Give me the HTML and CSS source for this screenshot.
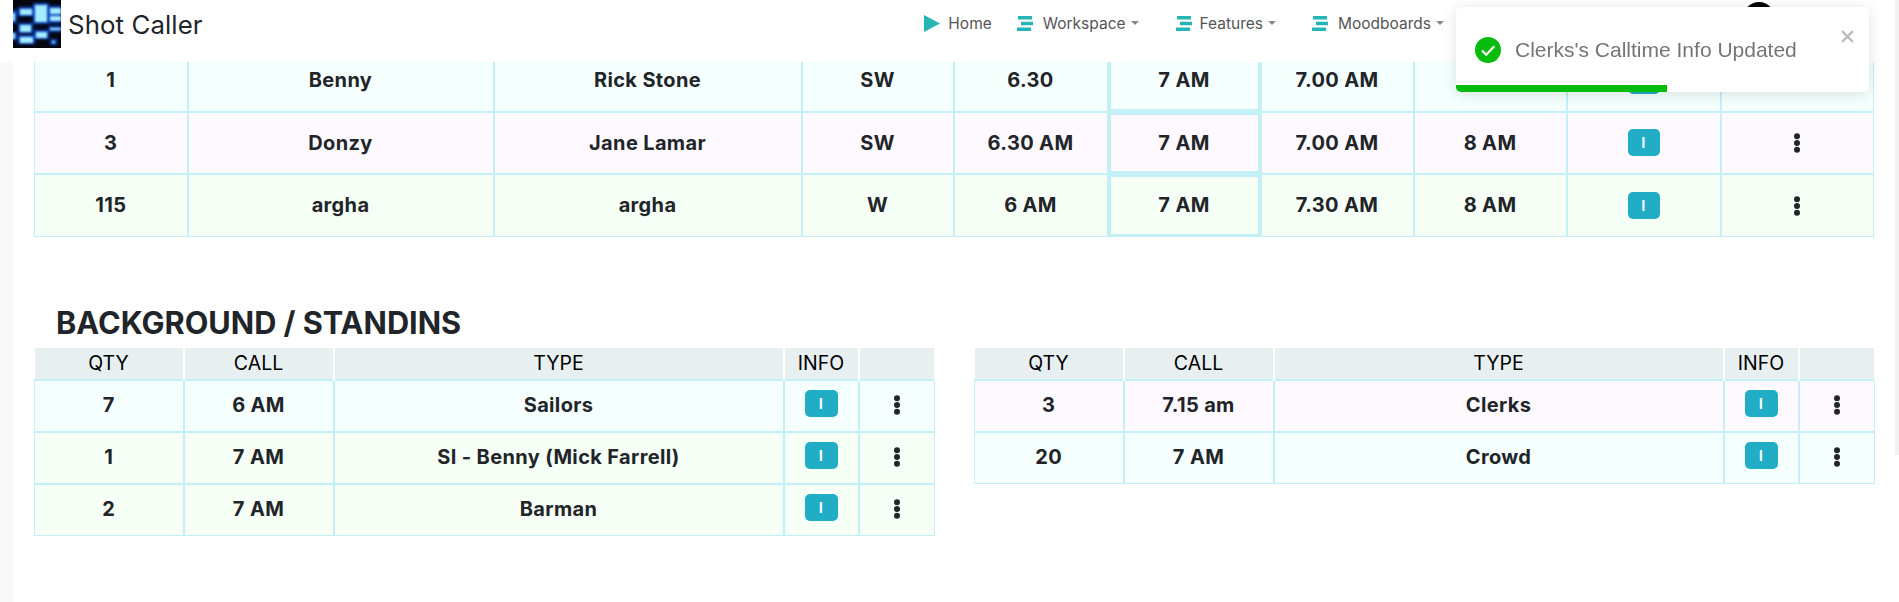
FILE: index.html
```html
<!DOCTYPE html>
<html>
<head>
  <meta charset="utf-8">
  <title>Shot Caller</title>
  <link rel="stylesheet" href="styles.css">
</head>
<body>
  <div class="navbar">
    <a class="brand" href="#">
      <svg class="logo" width="48" height="48" viewBox="0 0 48 48">
        <defs>
          <filter id="glow"><feGaussianBlur stdDeviation="1.8"/></filter>
          <filter id="soft"><feGaussianBlur stdDeviation="1.1"/></filter>
        </defs>
        <rect width="48" height="48" fill="#06060e"/>
        <g fill="#0b5cff" opacity="0.75" filter="url(#glow)">
          <rect x="5" y="7" width="15" height="9"/>
          <rect x="20" y="3" width="16" height="21"/>
          <rect x="36" y="6" width="12" height="17"/>
          <rect x="36" y="26" width="12" height="6"/>
          <rect x="5" y="23" width="15" height="10"/>
          <rect x="21" y="30" width="15" height="9"/>
          <rect x="5" y="35" width="17" height="9"/>
          <rect x="37" y="39" width="7" height="6"/>
          <rect x="-2" y="10" width="6" height="13"/>
          <rect x="-2" y="32" width="6" height="8"/>
        </g>
        <g fill="#a4ecff" filter="url(#soft)">
          <rect x="7" y="9" width="12" height="6"/>
          <rect x="22" y="5" width="12" height="17"/>
          <rect x="37" y="8" width="11" height="6"/>
          <rect x="37" y="16" width="11" height="5"/>
          <rect x="37" y="28" width="11" height="2"/>
          <rect x="7" y="25" width="11" height="7"/>
          <rect x="23" y="32" width="11" height="6"/>
          <rect x="7" y="37" width="13" height="6"/>
          <rect x="39" y="41" width="3" height="2"/>
          <rect x="-1" y="13" width="3" height="8"/>
          <rect x="-1" y="33" width="3" height="6"/>
        </g>
      </svg>
      <span>Shot Caller</span>
    </a>
    <div class="nav-links">
      <a class="nav-item nav-home" href="#">
        <svg width="16" height="17" viewBox="0 0 16 17"><path d="M0 0L16 8.5L0 17Z" fill="#26b5b5"/></svg>
        Home
      </a>
      <a class="nav-item nav-work" href="#">
        <svg width="16" height="15" viewBox="0 0 16 15"><path d="M1 0H15V3.5H1ZM4 5.7H16V9.2H4ZM0 11.5H14V15H0Z" fill="#26b5b5"/></svg>
        Workspace<i class="caret"></i>
      </a>
      <a class="nav-item nav-feat" href="#">
        <svg width="16" height="15" viewBox="0 0 16 15"><path d="M1 0H15V3.5H1ZM4 5.7H16V9.2H4ZM0 11.5H14V15H0Z" fill="#26b5b5"/></svg>
        Features<i class="caret"></i>
      </a>
      <a class="nav-item nav-mood" href="#">
        <svg width="16" height="15" viewBox="0 0 16 15"><path d="M1 0H15V3.5H1ZM4 5.7H16V9.2H4ZM0 11.5H14V15H0Z" fill="#26b5b5"/></svg>
        Moodboards<i class="caret"></i>
      </a>
    </div>
    <div class="avatar"></div>
  </div>

  <div class="scroll-track"></div>

  <div class="toast">
    <svg class="toast-icon" width="26" height="26" viewBox="0 0 26 26">
      <circle cx="13" cy="13" r="13" fill="#07bc0c"/>
      <path d="M7 13.5L11.2 17.7L19.3 9.2" fill="none" stroke="#fff" stroke-width="2.2"/>
    </svg>
    <span class="toast-text">Clerks's Calltime Info Updated</span>
    <svg class="toast-close" width="13" height="13" viewBox="0 0 13 13">
      <path d="M1 1L12 12M12 1L1 12" stroke="#bbb" stroke-width="2.4"/>
    </svg>
    <div class="toast-bar"></div>
  </div>

  <div class="page">
    <div class="side"></div>
    <div class="main">
      <table class="crew">
        <colgroup>
          <col class="c153"><col class="c306"><col class="c308"><col class="c152"><col class="c154">
          <col class="c153"><col class="c153"><col class="c153"><col class="c154"><col class="c153">
        </colgroup>
        <tbody>
          <tr class="teal">
            <td>1</td><td>Benny</td><td>Rick Stone</td><td>SW</td><td>6.30</td>
            <td class="call">7 AM</td><td>7.00 AM</td><td>8 AM</td>
            <td><a class="info-btn">I</a></td>
            <td><svg class="dots" width="8" height="20" viewBox="0 0 8 20"><circle cx="4" cy="3.2" r="3"/><circle cx="4" cy="10" r="3"/><circle cx="4" cy="16.8" r="3"/></svg></td>
          </tr>
          <tr class="purple">
            <td>3</td><td>Donzy</td><td>Jane Lamar</td><td>SW</td><td>6.30 AM</td>
            <td class="call">7 AM</td><td>7.00 AM</td><td>8 AM</td>
            <td><a class="info-btn">I</a></td>
            <td><svg class="dots" width="8" height="20" viewBox="0 0 8 20"><circle cx="4" cy="3.2" r="3"/><circle cx="4" cy="10" r="3"/><circle cx="4" cy="16.8" r="3"/></svg></td>
          </tr>
          <tr class="green">
            <td>115</td><td>argha</td><td>argha</td><td>W</td><td>6 AM</td>
            <td class="call">7 AM</td><td>7.30 AM</td><td>8 AM</td>
            <td><a class="info-btn">I</a></td>
            <td><svg class="dots" width="8" height="20" viewBox="0 0 8 20"><circle cx="4" cy="3.2" r="3"/><circle cx="4" cy="10" r="3"/><circle cx="4" cy="16.8" r="3"/></svg></td>
          </tr>
        </tbody>
      </table>

      <h2 class="section-title">BACKGROUND / STANDINS</h2>

      <div class="two-col">
        <table class="bg">
          <colgroup><col class="c149"><col class="c150"><col class="c450"><col class="c75"><col class="c76"></colgroup>
          <thead><tr><th>QTY</th><th>CALL</th><th>TYPE</th><th>INFO</th><th></th></tr></thead>
          <tbody>
            <tr class="teal">
              <td>7</td><td>6 AM</td><td>Sailors</td>
              <td><a class="info-btn">I</a></td>
              <td><svg class="dots" width="8" height="20" viewBox="0 0 8 20"><circle cx="4" cy="3.2" r="3"/><circle cx="4" cy="10" r="3"/><circle cx="4" cy="16.8" r="3"/></svg></td>
            </tr>
            <tr class="green">
              <td>1</td><td>7 AM</td><td>SI - Benny (Mick Farrell)</td>
              <td><a class="info-btn">I</a></td>
              <td><svg class="dots" width="8" height="20" viewBox="0 0 8 20"><circle cx="4" cy="3.2" r="3"/><circle cx="4" cy="10" r="3"/><circle cx="4" cy="16.8" r="3"/></svg></td>
            </tr>
            <tr class="green">
              <td>2</td><td>7 AM</td><td>Barman</td>
              <td><a class="info-btn">I</a></td>
              <td><svg class="dots" width="8" height="20" viewBox="0 0 8 20"><circle cx="4" cy="3.2" r="3"/><circle cx="4" cy="10" r="3"/><circle cx="4" cy="16.8" r="3"/></svg></td>
            </tr>
          </tbody>
        </table>

        <table class="bg">
          <colgroup><col class="c149"><col class="c150"><col class="c450"><col class="c75"><col class="c76"></colgroup>
          <thead><tr><th>QTY</th><th>CALL</th><th>TYPE</th><th>INFO</th><th></th></tr></thead>
          <tbody>
            <tr class="purple">
              <td>3</td><td>7.15 am</td><td>Clerks</td>
              <td><a class="info-btn">I</a></td>
              <td><svg class="dots" width="8" height="20" viewBox="0 0 8 20"><circle cx="4" cy="3.2" r="3"/><circle cx="4" cy="10" r="3"/><circle cx="4" cy="16.8" r="3"/></svg></td>
            </tr>
            <tr class="teal">
              <td>20</td><td>7 AM</td><td>Crowd</td>
              <td><a class="info-btn">I</a></td>
              <td><svg class="dots" width="8" height="20" viewBox="0 0 8 20"><circle cx="4" cy="3.2" r="3"/><circle cx="4" cy="10" r="3"/><circle cx="4" cy="16.8" r="3"/></svg></td>
            </tr>
          </tbody>
        </table>
      </div>
    </div>
  </div>
</body>
</html>
```

FILE: styles.css
```css
html, body {
  margin: 0;
  height: 100%;
  overflow: hidden;
}

body {
  background-color: white;
  color: #212529;
  font-family: Inter, "Noto Sans", sans-serif;
}

/* Top bar sits over the scrolled page */
.navbar {
  position: fixed;
  top: 0;
  left: 0;
  right: 0;
  height: 62px;
  background-color: white;
  display: flex;
  align-items: flex-start;
  padding: 0 455px 0 13px;
  z-index: 2;
}

.brand {
  display: flex;
  align-items: center;
  height: 48px;
  color: #212529;
  text-decoration: none;
  font-size: 25.8px;
}

.brand span {
  margin-left: 7px;
  letter-spacing: 0.1px;
}

.nav-links {
  display: flex;
  align-items: center;
  height: 46px;
  margin-left: auto;
}

.nav-item {
  display: flex;
  align-items: center;
  color: #555;
  text-decoration: none;
  font-size: 15.5px;
}

.nav-item svg {
  margin-right: 10px;
}

.nav-home svg { margin-right: 8px; }
.nav-feat svg { margin-right: 8px; }

.nav-work { margin-left: 25px; }
.nav-feat { margin-left: 37px; }
.nav-mood { margin-left: 36px; }

.caret {
  display: inline-block;
  margin-left: 5px;
  border-top: 4px solid #888;
  border-left: 4px solid transparent;
  border-right: 4px solid transparent;
}

.avatar {
  position: absolute;
  left: 1743px;
  top: 2px;
  width: 32px;
  height: 32px;
  border-radius: 50%;
  background-color: black;
}

.scroll-track {
  position: fixed;
  top: 0;
  right: 0;
  width: 4px;
  height: 455px;
  background-color: #f1f1f1;
  z-index: 3;
}

/* Toast */
.toast {
  position: fixed;
  left: 1456px;
  top: 7px;
  width: 413px;
  height: 85px;
  box-sizing: border-box;
  background-color: white;
  border-radius: 5px;
  box-shadow: 0 2px 15px rgba(0,0,0,0.12);
  overflow: hidden;
  display: flex;
  align-items: center;
  padding: 0 0 0 19px;
  z-index: 4;
}

.toast-text {
  margin-left: 14px;
  font-family: "Liberation Sans", Arial, sans-serif;
  font-size: 21px;
  color: #757575;
}

.toast-close {
  position: absolute;
  right: 15px;
  top: 23px;
}

.toast-bar {
  position: absolute;
  left: 0;
  bottom: 0;
  width: 211px;
  height: 7px;
  background-color: #07bc0c;
}

/* Page */
.page {
  display: flex;
}

.side {
  width: 13px;
  min-height: 602px;
  background-color: #f8f9fa;
}

.main {
  width: 1840px;
  padding: 48px 0 0 21px;
}

table {
  border-collapse: collapse;
  table-layout: fixed;
  width: 100%;
}

td {
  border: 2px solid #c3f0f7;
  text-align: center;
  font-size: 20px;
  font-weight: 700;
  letter-spacing: 0.35px;
  padding: 0;
}

td:first-child { border-left-width: 1px; }
td:last-child { border-right-width: 1px; }
tbody tr:last-child td { border-bottom-width: 1px; }

.crew td { height: 60.5px; }
.bg td {
  height: 48px;
  padding-bottom: 2px;
}

th {
  height: 31.5px;
  padding: 0;
  background-color: #e8eff1;
  border-right: 2px solid white;
  color: black;
  font-size: 19.5px;
  font-weight: 400;
}

.teal td { background-color: #f5fffe; }
.purple td { background-color: #fdf9ff; }
.green td { background-color: #f6fff6; }

td.call {
  box-shadow: inset 0 0 0 2px #c3f0f7;
}

.info-btn {
  display: inline-block;
  width: 32px;
  height: 27px;
  line-height: 27px;
  border-radius: 5px;
  background-color: #22adc6;
  color: white;
  font-size: 15px;
  font-weight: 600;
  vertical-align: middle;
}

.bg .info-btn {
  width: 33px;
  margin-bottom: 4px;
}

.dots {
  fill: #212529;
  vertical-align: middle;
  margin-bottom: 2px;
}

.c153 { width: 153px; }
.c306 { width: 306px; }
.c308 { width: 308px; }
.c152 { width: 152px; }
.c154 { width: 154px; }
.c149 { width: 149px; }
.c150 { width: 150px; }
.c450 { width: 450px; }
.c75 { width: 75px; }
.c76 { width: 76px; }

.section-title {
  margin: 68px 0 7px 22px;
  font-size: 30.7px;
  line-height: 36px;
  font-weight: 700;
}

.two-col {
  display: grid;
  grid-template-columns: 900px 900px;
  column-gap: 40px;
  align-items: start;
}
```
